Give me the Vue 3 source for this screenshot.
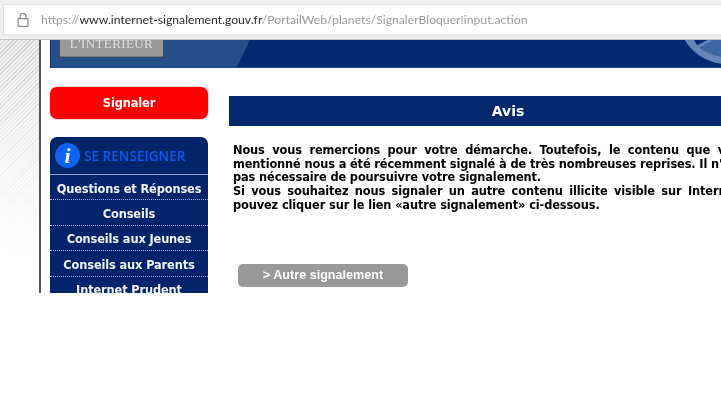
<script setup>
const menu = ['Questions et Réponses', 'Conseils', 'Conseils aux Jeunes', 'Conseils aux Parents', 'Internet Prudent']
</script>

<template>
  <div class="screen">
    <header class="toolbar">
      <div class="address">
        <svg class="lock" width="14" height="16" viewBox="0 0 14 16" fill="none" stroke="#8a8a8a" stroke-width="1.2">
          <rect x="2.1" y="6.6" width="9.8" height="7.8" />
          <path d="M4 6.6V4.4a3 3 0 0 1 6 0v2.2" />
        </svg>
        <span class="url"><span class="dim">https://</span><span class="host">www.internet-signalement.gouv.fr</span><span class="dim">/PortailWeb/planets/SignalerBloquer!input.action</span></span>
      </div>
    </header>
    <div class="viewport">
      <div class="hatch"></div>
      <div class="page">
        <div class="banner">
          <div class="banner-light">
            <div class="ministry"><span>L'INTÉRIEUR</span></div>
          </div>
          <svg class="swoosh" width="46" height="27" viewBox="0 0 46 27">
            <path fill="#3d659f" d="M33 0H46V18C36 16 28 12 21 8Z" />
            <path fill="#6586b6" d="M9 0C15 12 30 22 46 24V17C36 15 29 12 22 7L18 0Z" />
            <path fill="none" stroke="#6586b6" stroke-width="3" d="M21 7L35 0" />
          </svg>
        </div>
        <div class="columns">
          <aside class="side">
            <button class="signaler">Signaler</button>
            <nav class="box">
              <div class="box-head">
                <span class="info">i</span>
                <span class="box-title">SE RENSEIGNER</span>
              </div>
              <a v-for="item in menu" :key="item" class="item">{{ item }}</a>
            </nav>
          </aside>
          <main class="main">
            <h1 class="title">Avis</h1>
            <div class="body">
              <div class="l1">Nous vous remercions pour votre démarche. Toutefois, le contenu que vous</div>
              <div class="l2">mentionné nous a été récemment signalé à de très nombreuses reprises. Il n'est</div>
              <div>pas nécessaire de poursuivre votre signalement.</div>
              <div class="l4">Si vous souhaitez nous signaler un autre contenu illicite visible sur Internet, vous</div>
              <div>pouvez cliquer sur le lien «autre signalement» ci-dessous.</div>
            </div>
            <button class="other">&gt; Autre signalement</button>
          </main>
        </div>
      </div>
    </div>
  </div>
</template>

<style>
html, body { margin: 0; background: #fff; }
</style>

<style scoped>
.screen { width: 721px; height: 407px; overflow: hidden; background: #fff; filter: blur(0.3px); }
.toolbar { height: 40px; box-sizing: border-box; background: #f0f0f0; border-bottom: 1px solid #c8c8c8; padding: 4px 0 4px 3px; }
.address { height: 31px; box-sizing: border-box; background: #fff; border: 1px solid #e2e2e2; border-right: 0; display: flex; align-items: center; padding-left: 12px; }
.lock { flex: none; }
.url { margin-left: 11px; font: 12.2px "Lato", sans-serif; white-space: nowrap; color: #222; }
.dim { color: #9a9a9a; }
.host { color: #2b2b2b; }
.viewport { height: 253px; display: flex; overflow: hidden; }
.hatch { width: 39px; flex: none; border-right: 2px solid #555; background: linear-gradient(to bottom, rgba(255,255,255,0) 0, rgba(255,255,255,0.6) 45%, #fff 85%), repeating-linear-gradient(135deg, #d2d2d2 0 1px, #eeeeee 1px 3px); }
.page { flex: 1; min-width: 0; padding-left: 9px; overflow: hidden; }
.banner { height: 27px; width: 100%; background: #04296e; position: relative; overflow: hidden; border-bottom: 1px solid #1d4a8c; border-left: 1px solid #04296e; box-sizing: content-box; display: flex; }
.banner-light { width: 199px; background: #264f88; clip-path: polygon(0 0, 100% 0, 93.5% 100%, 0 100%); height: 100%; padding-left: 9px; box-sizing: border-box; }
.ministry { width: 103px; height: 17px; background: #9a9a9a; border-bottom: 1px solid #777; color: #dedede; font: 13px "Liberation Serif", serif; letter-spacing: 0.4px; text-align: center; line-height: 7px; overflow: hidden; box-sizing: border-box; }
.swoosh { position: absolute; right: 0; top: 0; }
.columns { display: flex; padding-top: 19px; }
.side { width: 158px; flex: none; }
.signaler { display: block; width: 158px; height: 32px; border: 0; border-radius: 7px; background: #fe0000; color: #fff; font: bold 11.4px "DejaVu Sans", sans-serif; letter-spacing: -0.13px; box-shadow: 0 0 0 1px #f3d6d6; padding: 0; }
.box { margin-top: 18px; background: #02246a; border-radius: 7px 7px 0 0; overflow: hidden; }
.box-head { height: 38px; display: flex; align-items: center; padding-left: 5px; border-bottom: 1px solid #8fa0c4; box-sizing: border-box; }
.info { width: 25px; height: 25px; border-radius: 50%; background: #0b63f0; color: #fff; font: italic bold 22px/25px "Liberation Serif", serif; text-align: center; }
.box-title { margin-left: 4px; color: #0a5cf0; font: 600 13.6px "Open Sans", sans-serif; }
.item { display: block; height: 25.4px; padding-top: 1.5px; text-align: center; color: #f1f3f8; font: bold 11.4px/25px "DejaVu Sans", sans-serif; letter-spacing: -0.13px; border-bottom: 1px dotted #a8b4d0; box-sizing: border-box; white-space: nowrap; }
.main { flex: 1; min-width: 0; margin-left: 21px; padding-top: 9px; }
.title { margin: 0; height: 30px; background: #03286e; color: #fff; font: bold 14px/30px "DejaVu Sans", sans-serif; text-align: center; width: 558px; }
.body { margin: 18px 0 0 4px; font: bold 11.4px/13.7px "DejaVu Sans", sans-serif; letter-spacing: -0.13px; color: #000; white-space: nowrap; }
.l1 { word-spacing: 3.7px; }
.l2 { word-spacing: 0px; }
.l4 { word-spacing: 2.6px; }
.other { display: block; margin: 51px 0 0 9px; width: 170px; height: 23px; border: 0; border-radius: 5px; background: #999; color: #fff; font: bold 12.6px "Liberation Sans", sans-serif; padding: 0; }
</style>
